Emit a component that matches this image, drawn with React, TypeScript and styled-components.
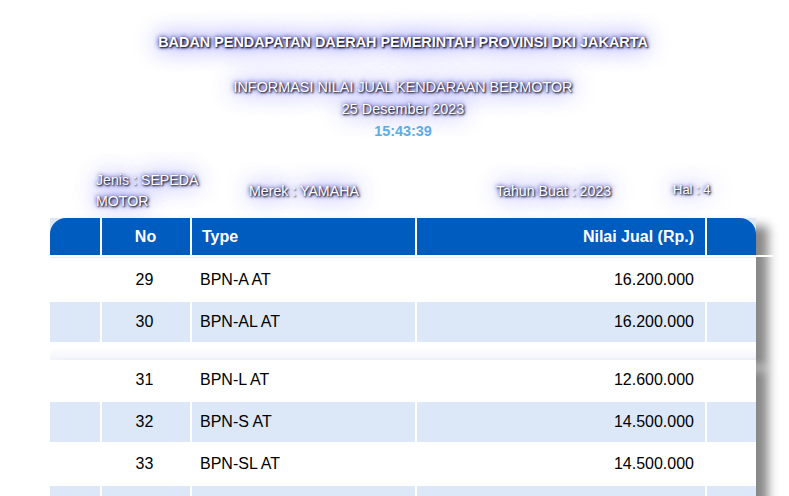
import React from "react";
import styled, { createGlobalStyle } from "styled-components";

const GlobalStyle = createGlobalStyle`
  html, body {
    margin: 0;
    padding: 0;
    background: #ffffff;
  }
  body {
    font-family: "Liberation Sans", Arial, sans-serif;
    color: #000;
    overflow: hidden;
  }
`;

const COLS = "50px 88px 223px 288px 49px";
const BLUE = "#005cbf";
const PALE = "#dce8f8";
const GLOW = "1px 1px 2px black, 0 0 25px blue, 0 0 5px darkblue";

const Page = styled.div`
  width: 706px;
  padding-left: 50px;
`;

const Masthead = styled.header`
  padding-top: 34px;
  text-align: center;
  color: #ffffff;
`;

const Title = styled.div`
  font-size: 14.4px;
  font-weight: bold;
  line-height: 17px;
  text-shadow: ${GLOW};
  margin-bottom: 25px;
`;

const Line = styled.div`
  font-size: 14.4px;
  line-height: 22px;
  text-shadow: ${GLOW};
`;

const Clock = styled.div`
  font-size: 14.4px;
  line-height: 22px;
  font-weight: bold;
  color: #5dade2;
`;

const InfoRow = styled.div`
  margin-top: 28px;
  margin-bottom: 6px;
  padding-left: 46px;
  display: grid;
  grid-template-columns: 153px 247px 177px 1fr;
  align-items: center;
  color: #ffffff;
  text-shadow: ${GLOW};
`;

const InfoItem = styled.div<{ $small?: boolean; $narrow?: boolean }>`
  font-size: ${(p) => (p.$small ? "13px" : "14.2px")};
  line-height: 21px;
  max-width: ${(p) => (p.$narrow ? "120px" : "none")};
  margin-top: ${(p) => (p.$small ? "-4px" : "0")};
`;

const Sheet = styled.section<{ $tail?: boolean }>`
  position: relative;
  width: 706px;
  background: ${(p) =>
    p.$tail
      ? "linear-gradient(to bottom, #ffffff 0, #ffffff calc(100% - 12px), #f3f3fc 100%)"
      : "#ffffff"};
  box-shadow: 12px 8px 10px #888888;
  padding-bottom: ${(p) => (p.$tail ? "18px" : "0")};
`;

const HeaderRow = styled.div`
  position: relative;
  display: grid;
  grid-template-columns: ${COLS};
  column-gap: 2px;
  height: 37px;
  background: #ffffff;

  &::after {
    content: "";
    position: absolute;
    left: 100%;
    top: 100%;
    width: 17px;
    height: 2px;
    background: #ffffff;
  }
`;

const HeaderCell = styled.div<{ $align?: "left" | "center" | "right" }>`
  background: ${BLUE};
  color: #ffffff;
  font-size: 16px;
  font-weight: bold;
  display: flex;
  align-items: center;
  justify-content: ${(p) =>
    p.$align === "center" ? "center" : p.$align === "right" ? "flex-end" : "flex-start"};
  padding: 0 11px 0 10px;
`;

const CornerCell = styled.div`
  background: ${PALE};
`;

const CornerCap = styled.div<{ $side: "left" | "right" }>`
  height: 100%;
  background: ${BLUE};
  border-top-left-radius: ${(p) => (p.$side === "left" ? "16px" : "0")};
  border-top-right-radius: ${(p) => (p.$side === "right" ? "16px" : "0")};
`;

const Rule = styled.div`
  margin: 2px 0;
  height: 1px;
  background: #e8eff9;
`;

const Body = styled.div`
  display: flex;
  flex-direction: column;
  gap: 2px;
  background: #ffffff;
`;

const DataRow = styled.div`
  display: grid;
  grid-template-columns: ${COLS};
  column-gap: 2px;
  height: 40px;
`;

const Cell = styled.div<{ $shade: boolean; $align?: "left" | "center" | "right" }>`
  background: ${(p) => (p.$shade ? PALE : "#ffffff")};
  font-size: 16px;
  display: flex;
  align-items: center;
  justify-content: ${(p) =>
    p.$align === "center" ? "center" : p.$align === "right" ? "flex-end" : "flex-start"};
  padding: 0 11px 0 8px;
  white-space: nowrap;
`;

type Item = { no?: number; type: string; price: string };

const pageOne: Item[] = [
  { no: 29, type: "BPN-A AT", price: "16.200.000" },
  { no: 30, type: "BPN-AL AT", price: "16.200.000" },
];

const pageTwo: Item[] = [
  { no: 31, type: "BPN-L AT", price: "12.600.000" },
  { no: 32, type: "BPN-S AT", price: "14.500.000" },
  { no: 33, type: "BPN-SL AT", price: "14.500.000" },
  { type: "", price: "" },
];

function Rows({ items }: { items: Item[] }) {
  return (
    <Body>
      {items.map((it, i) => {
        const shade = i % 2 === 1;
        return (
          <DataRow key={i}>
            <Cell $shade={shade} />
            <Cell $shade={shade} $align="center">
              {it.no}
            </Cell>
            <Cell $shade={shade}>{it.type}</Cell>
            <Cell $shade={shade} $align="right">
              {it.price}
            </Cell>
            <Cell $shade={shade} />
          </DataRow>
        );
      })}
    </Body>
  );
}

export default function App() {
  return (
    <>
      <GlobalStyle />
      <Page>
        <Masthead>
          <Title>BADAN PENDAPATAN DAERAH PEMERINTAH PROVINSI DKI JAKARTA</Title>
          <Line>INFORMASI NILAI JUAL KENDARAAN BERMOTOR</Line>
          <Line>25 Desember 2023</Line>
          <Clock>15:43:39</Clock>
        </Masthead>
        <InfoRow>
          <InfoItem $narrow>Jenis : SEPEDA MOTOR</InfoItem>
          <InfoItem>Merek : YAMAHA</InfoItem>
          <InfoItem>Tahun Buat : 2023</InfoItem>
          <InfoItem $small>Hal : 4</InfoItem>
        </InfoRow>
        <Sheet $tail>
          <HeaderRow>
            <CornerCell>
              <CornerCap $side="left" />
            </CornerCell>
            <HeaderCell $align="center">No</HeaderCell>
            <HeaderCell>Type</HeaderCell>
            <HeaderCell $align="right">Nilai Jual (Rp.)</HeaderCell>
            <CornerCell>
              <CornerCap $side="right" />
            </CornerCell>
          </HeaderRow>
          <Rule />
          <Rows items={pageOne} />
        </Sheet>
        <Sheet>
          <Rows items={pageTwo} />
        </Sheet>
      </Page>
    </>
  );
}
